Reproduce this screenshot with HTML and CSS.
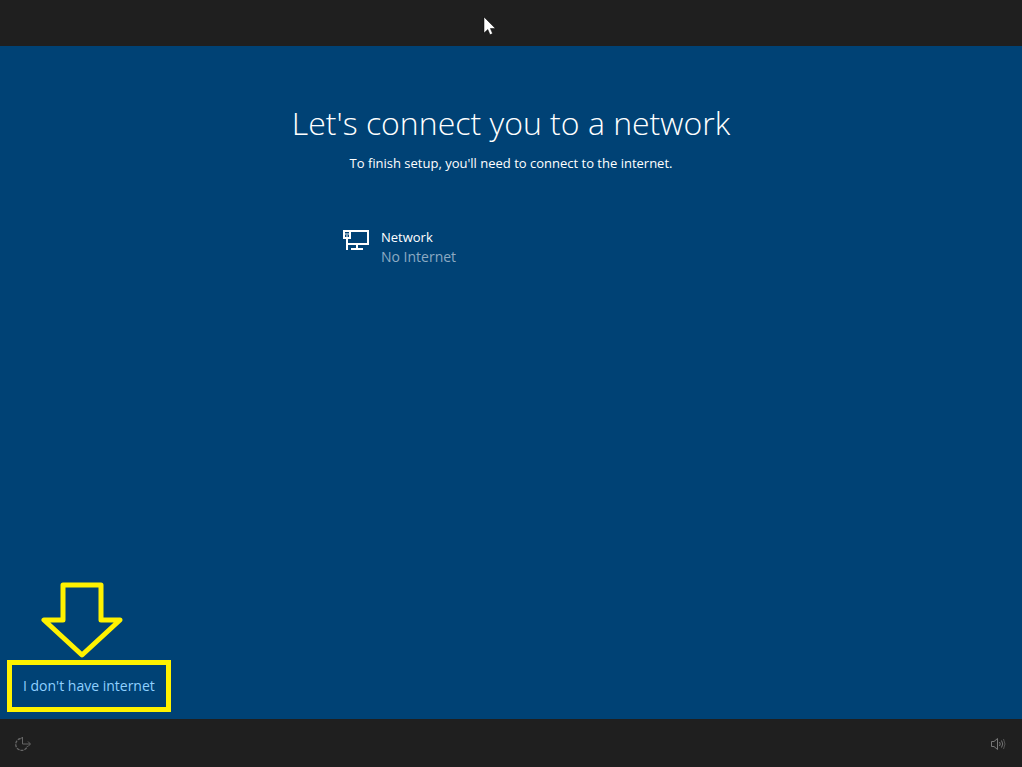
FILE: index.html
```html
<!DOCTYPE html>
<html lang="en">
<head>
<meta charset="utf-8">
<title>Network setup</title>
<link rel="stylesheet" href="styles.css">
</head>
<body>
<header class="topbar">
  <svg class="cursor" width="14" height="20" viewBox="0 0 14 20" aria-hidden="true"><path d="M1 1v16l3.800-3.500 2.200 5.200 2.600-1.100-2.200-5.100h5z" fill="#fff" stroke="#000" stroke-width=".5"/></svg>
</header>
<main class="setup">
  <h1 class="title">Let's connect you to a network</h1>
  <p class="subtitle">To finish setup, you'll need to connect to the internet.</p>
  <button class="network" type="button">
    <svg class="network-icon" width="28" height="22" viewBox="0 0 28 22" fill="none" stroke="#fff" stroke-width="2" aria-hidden="true">
      <path d="M9 2h17v13H4M5 10v11M15 15v5M9 20h12"/>
      <path d="M2 2h6v7H2z"/>
      <path d="M3 5h4" stroke-width="1"/>
      <path d="M4 7h2" stroke-width="1"/>
    </svg>
    <span class="network-text">
      <span class="network-name">Network</span>
      <span class="network-status">No Internet</span>
    </span>
  </button>
  <div class="callout">
    <svg class="arrow" width="82" height="76" viewBox="0 0 82 76" fill="none" stroke="#fff200" stroke-width="5" stroke-linejoin="round" aria-hidden="true"><path d="M22 3h38v35h19L41 73 3 38h19z"/></svg>
    <button class="skip" type="button">I don't have internet</button>
  </div>
</main>
<footer class="bottombar">
  <button class="tool" type="button" aria-label="Ease of access">
    <svg width="18" height="16" viewBox="0 0 18 16" fill="none" stroke="#666" aria-hidden="true"><path d="M6.500 2.500A6 6 0 1 0 13.500 10" stroke-width="1.300" stroke-dasharray="3 1"/><path d="M8.500 1v7H16M6.500 3l2-2M14 5.500 16.500 8 14 10.500"/></svg>
  </button>
  <button class="tool" type="button" aria-label="Volume">
    <svg width="18" height="16" viewBox="0 0 18 16" fill="none" stroke="#777" aria-hidden="true"><path d="M1.500 5.500H4l3.500-3v11l-3.500-3H1.500z"/><path d="M9.500 6q1.500 2 0 4M11.500 4.500q2.500 3.500 0 7"/><path d="M13.500 3q3 5 0 10" stroke="#555"/></svg>
  </button>
</footer>
</body>
</html>
```
FILE: styles.css
```css
* { box-sizing: border-box; }
body {
  margin: 0;
  min-height: 100vh;
  display: flex;
  flex-direction: column;
  background: #004275;
  color: #fff;
  font-family: "Open Sans", "Noto Sans", sans-serif;
  font-size: 14px;
}
button {
  font: inherit;
  color: inherit;
  background: none;
  border: 0;
  padding: 0;
  cursor: pointer;
}
svg { display: block; }
.topbar { position: relative; height: 46px; background: #1f1f1f; }
.cursor { position: absolute; left: 483px; top: 16px; }
.setup { flex: 1; display: flex; flex-direction: column; }
.title {
  margin: 53px 0 0;
  text-align: center;
  font-size: 32px;
  line-height: 48px;
  font-weight: 300;
}
.subtitle {
  margin: 6px 0 0;
  text-align: center;
  font-size: 13px;
  line-height: 20px;
}
.network {
  display: flex;
  gap: 11px;
  width: 338px;
  margin: 54px auto 0;
  text-align: left;
}
.network-icon { margin-top: 2px; }
.network-text { display: flex; flex-direction: column; line-height: 20px; }
.network-name { font-size: 13px; }
.network-status { color: #8caac3; }
.callout {
  margin: auto auto 7px 7px;
  display: flex;
  flex-direction: column;
}
.arrow { margin: 0 auto 2px 34px; }
.skip {
  height: 52px;
  padding: 0 11px 2px;
  border: 5px solid #fff200;
  color: #8fd0ff;
  white-space: nowrap;
}
.bottombar {
  height: 48px;
  padding: 2px 14px 0;
  display: flex;
  align-items: center;
  justify-content: space-between;
  background: #1f1f1f;
}
```
